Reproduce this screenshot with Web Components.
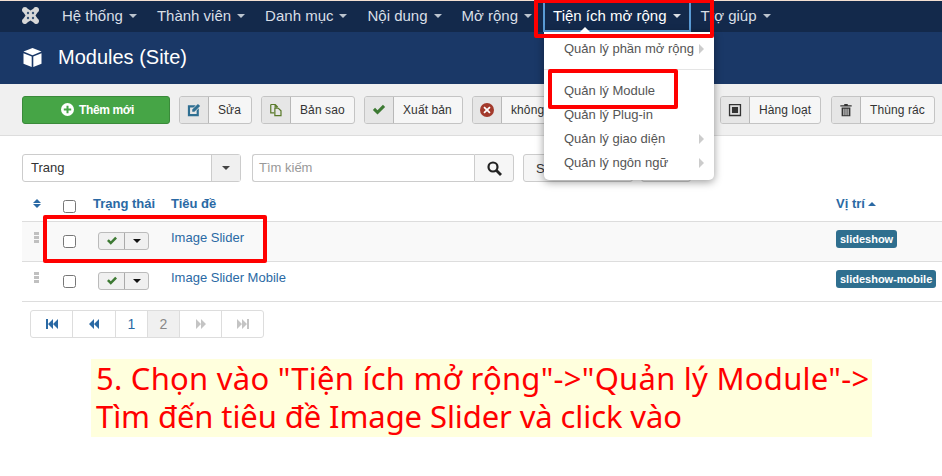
<!DOCTYPE html>
<html lang="vi"><head><meta charset="utf-8"><title>Modules (Site)</title>
<style>
html,body{margin:0;padding:0;background:#fff}
body{width:942px;height:476px;overflow:hidden;position:relative;font-family:"Liberation Sans",Arial,sans-serif;color:#333}
</style></head><body>
<j-navbar>
  <j-logo slot="logo"></j-logo>
  <j-nav>Hệ thống</j-nav>
  <j-nav>Thành viên</j-nav>
  <j-nav>Danh mục</j-nav>
  <j-nav>Nội dung</j-nav>
  <j-nav>Mở rộng</j-nav>
  <j-nav open>Tiện ích mở rộng</j-nav>
  <j-nav>Trợ giúp</j-nav>
</j-navbar>
<j-title>Modules (Site)</j-title>
<j-toolbar>
  <j-add>Thêm mới</j-add>
  <j-tool icon="edit" color="#2f6f92" style="width:73px">Sửa</j-tool>
  <j-tool icon="copy" color="#5a7a2a" style="width:94px">Bản sao</j-tool>
  <j-tool icon="check" color="#3d7a33" style="width:99px">Xuất bản</j-tool>
  <j-tool icon="x" color="#a33a2c" style="width:110px">không</j-tool>
  <j-tool icon="batch" color="#333" style="margin-left:auto;width:101px">Hàng loạt</j-tool>
  <j-tool icon="trash" color="#333" style="width:104px;margin-left:1px">Thùng rác</j-tool>
</j-toolbar>
<j-filters></j-filters>
<j-table>
  <j-row label="slideshow" striped>Image Slider</j-row>
  <j-row label="slideshow-mobile">Image Slider Mobile</j-row>
</j-table>
<j-pager></j-pager>
<j-caption><span style="letter-spacing:.25px">5. Chọn vào "Tiện ích mở rộng"-&gt;"Quản lý Module"-&gt;</span><br><span style="letter-spacing:-.1px">Tìm đến tiêu đề Image Slider và click vào</span></j-caption>
<j-menu>
  <j-mi sub>Quản lý phần mở rộng</j-mi>
  <j-mi divider></j-mi>
  <j-mi>Quản lý Module</j-mi>
  <j-mi>Quản lý Plug-in</j-mi>
  <j-mi sub>Quản lý giao diện</j-mi>
  <j-mi sub>Quản lý ngôn ngữ</j-mi>
</j-menu>
<j-mark style="left:534px;top:-1px;width:180px;height:39px"></j-mark>
<j-mark style="left:548px;top:69px;width:130px;height:40px"></j-mark>
<j-mark style="left:43px;top:215px;width:224px;height:48px"></j-mark>
<script>
const ICONS={
 edit:'<path d="M1 2.500h9L7.500 5H3.500v7.500H11V8.500l2.500-2.500v9H1z" /><path d="M6 7.500L12.500 1 15 3.500 8.500 10H6z"/>',
 copy:'<path fill="none" stroke="currentColor" stroke-width="1.4" d="M2 1.700h5v3h3v0M2 1.700v9.600h4M7 1.700l3 3"/><path fill="none" stroke="currentColor" stroke-width="1.4" d="M6.700 6h4l3 3v5.300H6.700z"/>',
 check:'<path d="M1 8l2.500-2.500L6.300 8.300 12.500 2 15 4.500 6.300 13.200z"/>',
 x:'<circle cx="8" cy="8" r="8"/><path fill="#fff" d="M5.300 3.900L8 6.600l2.700-2.700 1.400 1.400L9.400 8l2.700 2.700-1.400 1.400L8 9.400l-2.700 2.700-1.400-1.400L6.600 8 3.900 5.300z"/>',
 batch:'<path fill-rule="evenodd" d="M1 1h14v14H1zM2.500 2.500v11h11v-11z"/><rect x="4.500" y="4.500" width="7" height="7"/>',
 trash:'<path d="M1.500 2.500h13V4h-13zM6 1h4v1.500H6zM3 5h10v10H3z"/><path fill="#e8e8e8" d="M5 6.500h1.200V14H5zM7.400 6.500h1.200V14H7.400zM9.800 6.500H11V14H9.800z"/>'
};
function def(name,css,html){
  customElements.define(name,class extends HTMLElement{
    constructor(){super();this.attachShadow({mode:'open'});}
    connectedCallback(){
      const h=typeof html==='function'?html(this):html;
      this.shadowRoot.innerHTML='<style>'+css+'</style>'+h;
    }
  });
}
def('j-navbar',`:host{display:flex;align-items:center;height:31px;border-top:1px solid #f3dfd2;background:#13294b;color:#ddd}
 .l{width:62px;display:flex;padding-left:22px;box-sizing:border-box}`,
 `<div class="l"><slot name="logo"></slot></div><slot></slot>`);
def('j-logo',`:host{display:block;width:17px;height:17px;margin-top:-2px}svg{display:block}`,
 `<svg width="17" height="17" viewBox="0 0 17 17"><path fill="#d8d8d8" d="M3 0a3 3 0 0 1 2.700 1.700L8.500 3.500l2.800-1.800A3 3 0 1 1 15.300 5.700L13.500 8.500l1.800 2.800a3 3 0 1 1-4 4L8.500 13.500l-2.800 1.800a3 3 0 1 1-4-4L3.500 8.500 1.700 5.700A3 3 0 0 1 3 0z"/><g fill="#3b5577"><circle cx="6" cy="6" r="1.200"/><circle cx="11" cy="6" r="1.200"/><circle cx="6" cy="11" r="1.200"/><circle cx="11" cy="11" r="1.200"/></g></svg>`);
def('j-nav',`:host{display:flex;align-items:center;height:31px;box-sizing:border-box;margin-right:20px;font-size:15px;color:#d9dfe6;white-space:nowrap;padding-bottom:3px}
 :host([open]){margin:0 10px 0 -9px;padding:0 8px 1px 8px;color:#fff;border:solid #5a9bd5;border-width:0 2px 2px 2px}
 i{display:inline-block;margin-left:6px;margin-top:2px;border:4px solid transparent;border-top-color:currentColor;border-bottom:0;opacity:.85}`,
 `<slot></slot><i></i>`);
def('j-title',`:host{display:flex;align-items:center;height:52px;background:#1a3867;color:#fff;font-size:20px;padding-left:23px;gap:16px;box-sizing:border-box;padding-bottom:2px}svg{display:block}`,
 `<svg width="19" height="19" viewBox="0 0 19 19" fill="#fff"><path d="M9.500 0L18.500 3.600 9.500 7.200 .5 3.600z"/><path d="M.5 5.300l8.200 3.300V19L.5 15.700z"/><path d="M18.500 5.300l-8.200 3.300V19l8.200-3.300z"/></svg><span><slot></slot></span>`);
def('j-toolbar',`:host{display:flex;align-items:center;gap:9px;height:52px;background:#f0f0f0;border-bottom:1px solid #ddd;box-sizing:border-box;padding:0 7px 0 22px}`,`<slot></slot>`);
def('j-add',`:host{display:flex;align-items:center;justify-content:center;gap:5px;width:148px;height:28px;box-sizing:border-box;padding-left:3px;background:#46a546;border:1px solid #3a8a3a;border-radius:3px;color:#fff;font-size:12px;font-weight:700;letter-spacing:-.35px}svg{display:block}`,
 `<svg width="13" height="13" viewBox="0 0 13 13"><circle cx="6.500" cy="6.500" r="6.500" fill="#fff"/><path fill="#46a546" d="M5.500 2.800h2v2.700h2.700v2H7.500v2.700h-2V7.500H2.800v-2h2.700z"/></svg><span><slot></slot></span>`);
def('j-tool',`:host{display:flex;align-items:center;flex:none;height:28px;box-sizing:border-box;background:#f6f6f6;border:1px solid #c4c4c4;border-radius:3px;font-size:12px;letter-spacing:.1px;color:#333;white-space:nowrap}
 .i{width:29px;height:100%;box-sizing:border-box;display:flex;align-items:center;justify-content:center;background:#e6e6e6;border-right:1px solid #b8b8b8;border-radius:2px 0 0 2px;flex:none}
 .t{padding:0 0 0 9px}svg{display:block}`,
 el=>`<span class="i"><svg width="14" height="14" viewBox="0 0 16 16" fill="currentColor" style="color:${el.getAttribute('color')}">${ICONS[el.getAttribute('icon')]}</svg></span><span class="t"><slot></slot></span>`);
def('j-filters',`:host{display:flex;align-items:flex-start;height:54px;box-sizing:border-box;padding:18px 0 0 22px;font-size:13px;color:#333}
 .sel{display:flex;width:219px;height:28px;box-sizing:border-box;border:1px solid #ccc;border-radius:3px;margin-right:11px}
 .sel b{flex:1;font-weight:400;padding:0 8px;line-height:25px}
 .sel i{width:28px;background:#f0f0f0;border-left:1px solid #ccc;display:flex;align-items:center;justify-content:center}
 .sel i::after{content:"";border:4px solid transparent;border-top-color:#444;border-bottom:0}
 .in{width:222px;height:28px;box-sizing:border-box;border:1px solid #ccc;border-radius:3px 0 0 3px;border-right:0;color:#999;padding:0 6px;line-height:26px;font-size:13px}
 .btn{height:28px;box-sizing:border-box;border:1px solid #ccc;background:#f6f6f6;border-radius:0 3px 3px 0;display:flex;align-items:center;justify-content:center;font-size:13px;white-space:nowrap}
 svg{display:block}`,
 `<div class="sel"><b>Trang</b><i></i></div><div class="in">Tìm kiếm</div>
  <div class="btn" style="width:40px;margin-right:9px"><svg width="15" height="15" viewBox="0 0 15 15" fill="none" stroke="#222" stroke-width="2.200"><circle cx="6" cy="6" r="4.500"/><path d="M9.500 9.500L14 14" stroke-width="2.800"/></svg></div>
  <div class="btn" style="width:110px;margin-right:8px;border-radius:3px;justify-content:flex-start;padding-left:12px">S</div>
  <div class="btn" style="width:50px;border-radius:3px"></div>`);
def('j-table',`:host{display:block;margin-left:22px;font-size:13px}
 .h{display:grid;grid-template-columns:71px 78px 665px auto;height:32px;box-sizing:border-box;border-bottom:1px solid #ddd;align-items:center;font-weight:700;font-size:13px;color:#2a69a4;padding-bottom:4px}
 .a{display:flex;align-items:center;justify-content:space-between;padding:0 0 0 11px;box-sizing:border-box}
 .s{display:flex;flex-direction:column;gap:1px}
 .s::before{content:"";border:4px solid transparent;border-top:0;border-bottom-color:#2a69a4}
 .s::after{content:"";border:4px solid transparent;border-bottom:0;border-top-color:#2a69a4}
 .c{width:13px;height:13px;box-sizing:border-box;border:1px solid #777;border-radius:2.500px;background:#fff;margin:6px 17px 0 0;display:block}
 .u{display:inline-block;margin-left:3px;vertical-align:2px;border:4px solid transparent;border-top:0;border-bottom-color:#2a69a4}`,
 `<div class="h"><div class="a"><span class="s"></span><span class="c"></span></div><div>Trạng thái</div><div>Tiêu đề</div><div>Vị trí<span class="u"></span></div></div><slot></slot>`);
def('j-row',`:host{display:grid;grid-template-columns:71px 78px 665px auto;height:40px;box-sizing:border-box;border-bottom:1px solid #ddd;font-size:12px}
 :host([striped]){background:#f9f9f9}
 .a{display:flex;justify-content:space-between;padding:10px 0 0 12px;box-sizing:border-box}
 .g{display:flex;flex-direction:column;gap:1px;width:5px;padding-top:0}.g b{height:3px;background:#c0c0c0}
 .c{width:13px;height:13px;box-sizing:border-box;border:1px solid #777;border-radius:2.500px;background:#fff;margin:3px 17px 0 0}
 .t{display:flex;width:51px;height:18px;box-sizing:border-box;border:1px solid #bbb;border-radius:3px;background:#f0f0f0;margin:10px 0 0 5px}
 .t span{display:flex;align-items:center;justify-content:center}
 .t span:first-child{width:25px;border-right:1px solid #aaa}.t span:last-child{flex:1}
 .t span:last-child::after{content:"";border:4px solid transparent;border-top-color:#111;border-bottom:0}
 .n{color:#2a69a4;font-size:13px;padding-top:8px}
 .l{display:block;width:max-content;margin-top:8px;background:#2f6f8f;color:#fff;font-size:11px;font-weight:700;padding:0 4px;line-height:18px;border-radius:3px;white-space:nowrap}`,
 el=>`<div class="a"><span class="g"><b></b><b></b><b></b></span><span class="c"></span></div><div><div class="t"><span><svg width="12" height="10" viewBox="0 0 16 14" fill="#3d7a33"><path d="M1 7l2.500-2.500L6.300 7.300 12.500 1 15 3.500 6.300 12.200z"/></svg></span><span></span></div></div><div class="n"><slot></slot></div><div><span class="l">${el.getAttribute('label')}</span></div>`);
def('j-pager',`:host{display:flex;width:234px;height:28px;box-sizing:border-box;margin:8px 0 0 30px;border:1px solid #ddd;border-radius:3px;font-size:14px;color:#2a69a4}
 span{display:flex;align-items:center;justify-content:center;border-right:1px solid #ddd;box-sizing:border-box}
 span:last-child{border-right:0}svg{display:block}.d{background:#f0f0f0;color:#888}`,
 `<span style="width:42px"><svg width="12" height="10" viewBox="0 0 12 10" fill="#2a69a4"><path d="M0 0h2v10H0zM7 0v10L2 5zM12 0v10L7 5z"/></svg></span>
  <span style="width:43px"><svg width="10" height="10" viewBox="0 0 10 10" fill="#2a69a4"><path d="M5 0v10L0 5zM10 0v10L5 5z"/></svg></span>
  <span style="width:32px">1</span><span class="d" style="width:32px">2</span>
  <span style="width:42px"><svg width="10" height="10" viewBox="0 0 10 10" fill="#c4c4c4"><path d="M0 0v10l5-5zM5 0v10l5-5z"/></svg></span>
  <span style="flex:1"><svg width="12" height="10" viewBox="0 0 12 10" fill="#c4c4c4"><path d="M0 0v10l5-5zM5 0v10l5-5zM10 0h2v10h-2z"/></svg></span>`);
def('j-caption',`:host{display:block;width:781px;height:78px;box-sizing:border-box;margin:21px 0 0 91px;padding:0 0 0 5px;background:#ffd;color:#f00;font-family:"Noto Sans",Tahoma,sans-serif;font-size:31px;line-height:38px;white-space:nowrap}`,`<slot></slot>`);
def('j-menu',`:host{position:absolute;left:544px;top:32px;width:170px;height:148px;box-sizing:border-box;background:#fff;border-radius:0 0 5px 5px;box-shadow:0 2px 8px rgba(0,0,0,.4);padding:4px 0;font-size:13px;color:#555;display:block}
 :host::before{content:"";position:absolute;left:36px;top:-5px;border:5px solid transparent;border-top:0;border-bottom-color:#fff}`,`<slot></slot>`);
def('j-mi',`:host{display:flex;align-items:center;height:24px;padding:0 0 0 20px;position:relative;white-space:nowrap}
 :host([divider]){height:10px;padding:0;border-bottom:1px solid #e5e5e5;margin:0 0 8px;box-sizing:border-box}
 i{position:absolute;left:155px;top:8px;border:5px solid transparent;border-right:0;border-left-color:#ccc}`,
 el=>`<slot></slot>${el.hasAttribute('sub')?'<i></i>':''}`);
def('j-mark',`:host{position:absolute;display:block;box-sizing:border-box;border:4px solid #f00;border-radius:2px}`,``);
</script>
</body></html>
